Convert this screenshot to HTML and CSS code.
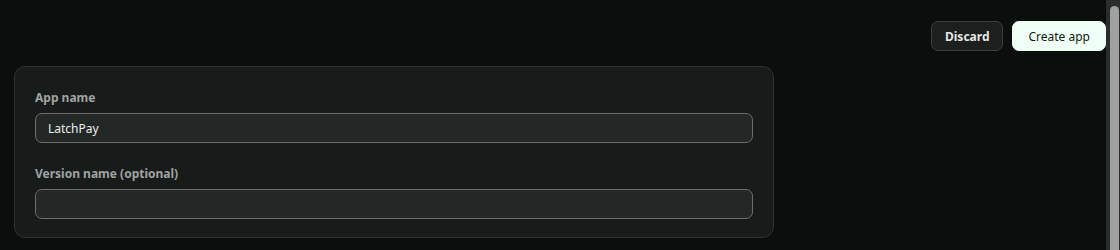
FILE: index.html
```html
<!doctype html>
<html>
<head>
<title>Create app</title>
<link rel="stylesheet" href="styles.css">
</head>
<body>
<main class="page">
	<div class="actions">
		<button class="btn discard">Discard</button>
		<button class="btn create">Create app</button>
	</div>
	<form class="card">
		<div class="field">
			<label for="app-name">App name</label>
			<input id="app-name" type="text" value="LatchPay">
		</div>
		<div class="field">
			<label for="version-name">Version name (optional)</label>
			<input id="version-name" type="text">
		</div>
	</form>
</main>
<div class="scrollbar"><div class="thumb"></div></div>
</body>
</html>
```

FILE: styles.css
```css
* {
	box-sizing: border-box;
	margin: 0;
	padding: 0;
	font-family: "Noto Sans", "Open Sans", sans-serif;
}

html {
	background: #0a0e0c;
}

body {
	color: #e8ebea;
	font-size: 12px;
}

.page {
	padding: 21px 14px 20px 14px;
}

.actions {
	display: flex;
	justify-content: flex-end;
	gap: 9px;
	margin-bottom: 15px;
}

.btn {
	height: 30px;
	padding: 0 14px;
	border-radius: 7px;
	font-size: 12px;
	cursor: pointer;
}

.discard {
	background: #1b1f1e;
	border: 1px solid #3a3f3d;
	color: #e4e6e5;
	font-weight: 700;
	padding: 0 13px;
}

.create {
	background: #effff6;
	border: 1px solid #effff6;
	color: #151817;
	padding: 0 15px;
}

.card {
	width: 760px;
	background: #171b1a;
	border: 1px solid #2d3230;
	border-radius: 11px;
	padding: 21px 20px 18px;
	display: flex;
	flex-direction: column;
	gap: 21px;
}

.field {
	display: flex;
	flex-direction: column;
	gap: 5px;
}

.field label {
	color: #a0a3a2;
	font-weight: 700;
	line-height: 20px;
}

.field input {
	height: 30px;
	width: 100%;
	background: #232827;
	border: 1px solid #6a6e6d;
	border-radius: 7px;
	padding: 0 12px;
	color: #eceeed;
	font-size: 12px;
	outline: none;
}

/* page scrollbar, drawn over the right edge */
.scrollbar {
	position: fixed;
	top: 0;
	right: 0;
	bottom: 0;
	width: 14px;
	background: #2b2d2c;
	padding: 6px 1px 0 4px;
}

.thumb {
	height: 100%;
	background: #a0a0a0;
	border-radius: 5px 5px 0 0;
}
```
